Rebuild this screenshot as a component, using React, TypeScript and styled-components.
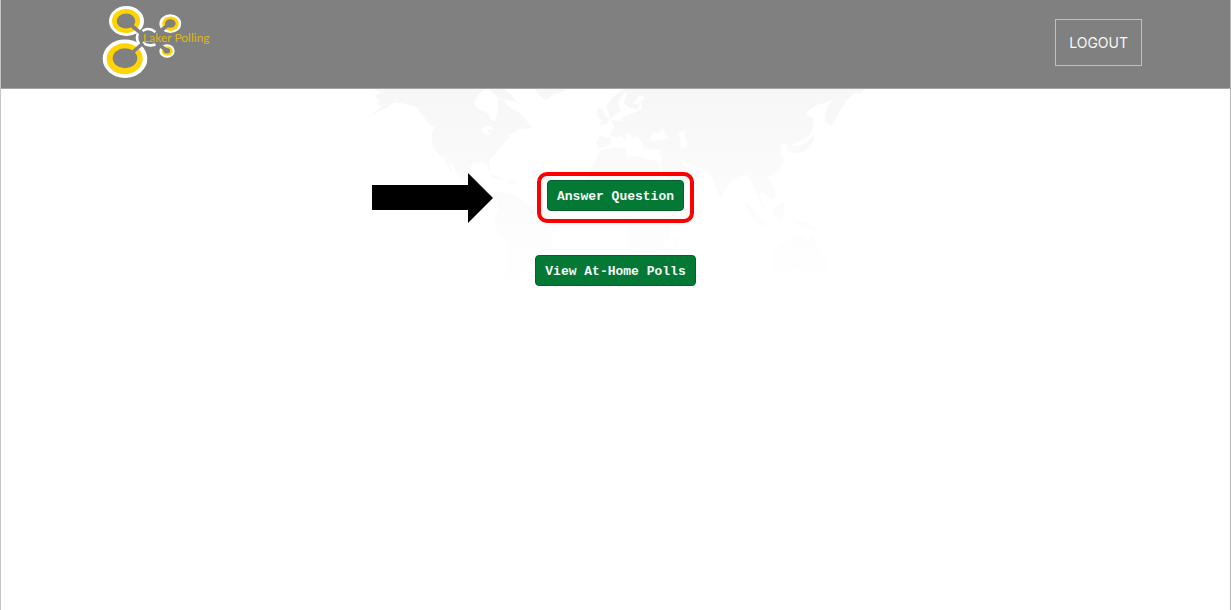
import React from 'react';
import styled, { createGlobalStyle } from 'styled-components';

const GlobalStyle = createGlobalStyle`
  * { box-sizing: border-box; }
  body { margin: 0; background: #ffffff; }
`;

const Page = styled.div`
  display: flex;
  flex-direction: column;
  min-height: 100vh;
  border-left: 1px solid #c4c4c4;
  border-right: 1px solid #b4b4b4;
`;

const Header = styled.header`
  display: flex;
  align-items: center;
  justify-content: space-between;
  height: 89px;
  padding: 0 88px 4px 101px;
  background: #808080;
  border-bottom: 1px solid #a6a6a6;
`;

const HomeLink = styled.a`
  display: block;
  line-height: 0;
`;

const LogoutButton = styled.button`
  height: 47px;
  padding: 2px 13px 0;
  border: 1px solid #f2c814;
  background: transparent;
  color: #f8f8f8;
  font: 400 14px/16px Inter, sans-serif;
  cursor: pointer;
`;

const Main = styled.main`
  position: relative;
  z-index: 0;
  flex: 1;
  display: flex;
  flex-direction: column;
  align-items: center;
  gap: 32px;
  padding-top: 83px;
`;

const MapBackdrop = styled.svg`
  position: absolute;
  z-index: -1;
  top: 0;
  left: calc(50% - 255px);
`;

const Highlight = styled.div`
  position: relative;
  padding: 4px 6px 8px;
  border: 4px solid #ff0000;
  border-radius: 10px;
`;

const Pointer = styled.svg`
  position: absolute;
  top: -3px;
  right: 100%;
  margin-right: 47px;
`;

const PollButton = styled.button`
  display: block;
  height: 31px;
  padding: 2px 9px 0;
  border: 1px solid #05602c;
  border-radius: 4px;
  background: #047835;
  color: #f7faf8;
  font: 700 13px/18px 'Liberation Mono', monospace;
  cursor: pointer;
`;

const LogoText = styled.text`
  font: 400 12px Lato, sans-serif;
  fill: #dcb814;
`;

const Logo = () => (
  <svg width="116" height="74" viewBox="102 5 116 74" role="img" aria-label="Laker Polling">
    <g fill="#fff">
      <ellipse cx="126.500" cy="21" rx="17.500" ry="15" />
      <ellipse cx="125" cy="58.700" rx="22.300" ry="19.300" />
      <ellipse cx="170.300" cy="23.700" rx="10.900" ry="9.400" />
      <ellipse cx="167" cy="51" rx="7.700" ry="6.700" />
    </g>
    <g fill="#ffd400">
      <ellipse cx="126" cy="21" rx="14" ry="12" />
      <ellipse cx="124.700" cy="58.800" rx="18" ry="15.500" />
      <ellipse cx="170.500" cy="23.700" rx="8.300" ry="7.200" />
      <ellipse cx="167.300" cy="51" rx="5.400" ry="4.700" />
    </g>
    <g fill="#808080">
      <ellipse cx="126" cy="21" rx="9.300" ry="7.500" />
      <ellipse cx="125" cy="58.300" rx="12.300" ry="10" />
      <ellipse cx="170.300" cy="23.500" rx="5.300" ry="4.300" />
      <ellipse cx="166.800" cy="50.800" rx="3.300" ry="2.700" />
    </g>
    <g fill="none" stroke="#fff" strokeWidth="2.600">
      <path d="M139.500 31Q134.500 37.500 139.500 44.500" />
      <path d="M142.500 31Q148.500 26.500 155.500 32" />
      <path d="M142.500 42.500Q148 47 155.500 44.500" />
    </g>
    <g fill="none" stroke="#808080" strokeWidth="3.600">
      <path d="M132 26L142 34M133 52L143 43" />
      <path d="M168 25L158 33M166 50L158 44" />
    </g>
    <LogoText x="143" y="42">Laker Polling</LogoText>
  </svg>
);

const WorldMap = () => (
  <MapBackdrop width="520" height="210" viewBox="0 12 1560 630" aria-hidden="true">
    <defs>
      <linearGradient id="fade" gradientUnits="userSpaceOnUse" x1="0" y1="12" x2="0" y2="642">
        <stop offset="0" stopColor="#f7f7f7" />
        <stop offset="0.350" stopColor="#fafafa" />
        <stop offset="0.700" stopColor="#fdfdfd" />
        <stop offset="1" stopColor="#ffffff" />
      </linearGradient>
    </defs>
    <g fill="url(#fade)">
      {/* North and Central America */}
      <path d="M36 12L60 22L40 34L58 48L48 58L62 64L45 78L25 92L80 68L100 52L140 58L165 66L185 92L205 118L220 128L212 150L214 180L232 208L250 222L262 245L276 266L270 245L262 232L272 240L290 270L310 287L340 296L362 318L380 330L372 318L366 292L348 290L340 276L330 272L326 250L336 236L362 232L378 240L384 262L388 240L386 226L402 208L420 186L430 172L450 158L440 148L466 140L474 132L515 128L500 112L488 94L470 80L440 64L428 46L410 42L412 70L402 110L390 104L384 86L346 70L338 54L352 30L372 12Z" />
      <path d="M384 12L410 38L440 46L470 52L450 30L430 12Z" />
      <path d="M520 12L534 30L556 46L570 34L604 20L612 12Z" />
      <path d="M384 268L412 274L430 284L414 284L394 276ZM440 288L466 290L460 298L440 297Z" />
      {/* South America */}
      <path d="M384 330L412 318L446 324L478 340L504 358L522 366L586 386L596 398L590 430L574 450L572 482L548 496L530 520L510 540L494 560L476 582L462 618L434 620L432 600L440 540L442 490L428 468L404 430L400 400L412 378L410 350Z" />
      {/* Europe and Asia */}
      <path d="M708 68L724 72L732 92L744 100L740 118L714 122L722 106L708 92ZM716 152L752 160L748 184L710 190L706 172Z" />
      <path d="M736 66L752 38L790 12L1510 12L1500 28L1484 22L1462 40L1450 58L1430 90L1412 122L1394 112L1390 88L1404 60L1418 42L1392 54L1366 60L1340 78L1336 92L1358 98L1354 136L1338 158L1308 172L1290 184L1284 196L1300 204L1282 200L1276 178L1256 176L1262 190L1258 200L1270 220L1262 250L1234 272L1216 276L1246 320L1240 346L1220 336L1204 322L1196 330L1208 368L1226 390L1212 380L1196 350L1180 310L1162 270L1140 272L1120 282L1096 310L1080 346L1066 316L1050 276L1024 252L984 242L970 228L960 226L972 246L1016 258L1006 284L956 312L930 316L906 268L888 236L904 230L902 218L888 198L840 188L838 176L814 160L802 142L790 152L812 178L804 188L774 158L754 154L744 150L760 128L750 108Z" />
      {/* Africa */}
      <path d="M718 196L754 188L790 190L802 216L824 212L844 220L888 228L904 262L926 318L980 322L978 342L950 380L924 408L928 456L908 474L902 500L870 544L826 552L808 532L800 476L804 430L792 402L740 388L704 374L680 344L670 296L694 246Z" />
      <path d="M936 464L956 452L952 488L938 504L930 490Z" />
      {/* Islands and Australia */}
      <path d="M1150 350L1176 372L1198 402L1238 420L1220 422L1190 416L1166 386ZM1234 374L1266 350L1274 372L1260 406L1236 396ZM1290 402L1330 410L1370 428L1362 438L1320 430Z" />
      <path d="M1232 502L1268 474L1288 464L1310 454L1328 458L1340 472L1352 448L1366 482L1398 516L1400 546L1380 578L1342 574L1318 552L1280 558L1240 562Z" />
      <path d="M1288 182L1316 182L1344 166L1354 152L1360 158L1348 184L1322 204L1292 202Z" />
    </g>
    <g fill="#fff">
      {/* Inland seas and lakes */}
      <path d="M868 164L874 142L892 146L898 138L900 132L912 136L910 148L926 160L900 164L878 168Z" />
      <path d="M952 144L974 136L968 148L980 178L970 192L958 186L960 166Z" />
      <path d="M738 186L760 166L778 152L800 164L828 154L846 176L848 196L900 192L894 220L866 222L824 212L806 188Z" />
      <path d="M748 104L760 88L780 80L770 50L786 28L800 22L788 52L804 68L828 72L840 50L842 72L818 84L786 94L778 108Z" />
      <path d="M360 132L386 122L400 134L380 134L388 150L370 148Z" />
      <path d="M814 58L836 30L852 38L832 56Z" />
      <path d="M888 232L896 236L924 306L916 300Z" />
    </g>
  </MapBackdrop>
);

export default function App() {
  return (
    <>
      <GlobalStyle />
      <Page>
        <Header>
          <HomeLink href="#"><Logo /></HomeLink>
          <LogoutButton type="button">LOGOUT</LogoutButton>
        </Header>
        <Main>
          <WorldMap />
          <Highlight>
            <Pointer width="122" height="50" viewBox="0 0 122 50" aria-hidden="true">
              <path d="M0 12H96V0L121 25L96 50V37H0Z" />
            </Pointer>
            <PollButton type="button">Answer Question</PollButton>
          </Highlight>
          <PollButton type="button">View At-Home Polls</PollButton>
        </Main>
      </Page>
    </>
  );
}
